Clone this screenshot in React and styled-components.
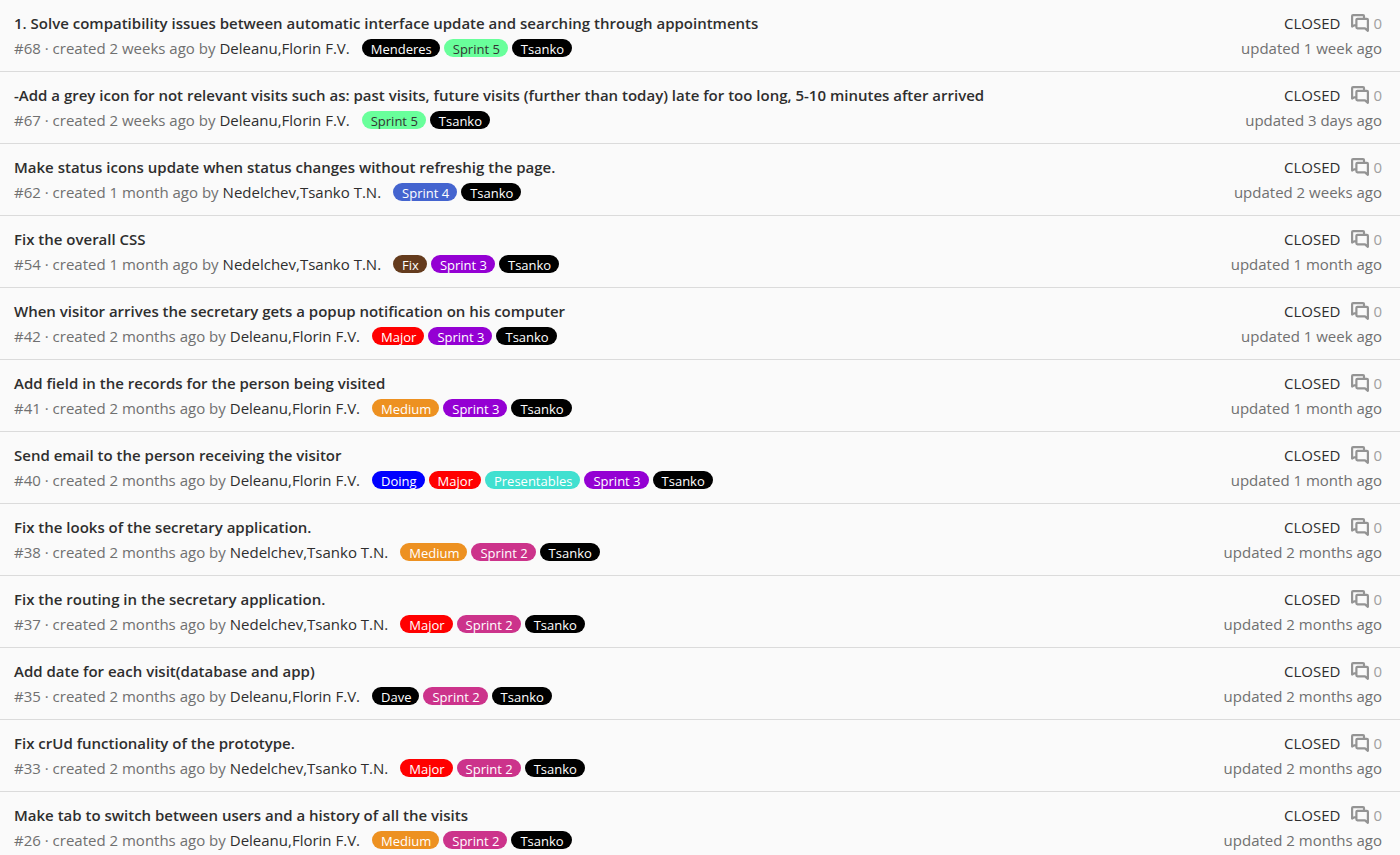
import React from "react";
import styled, { createGlobalStyle } from "styled-components";

const GlobalStyle = createGlobalStyle`
  * { box-sizing: border-box; }
  body {
    margin: 0;
    background: #fafafa;
    color: #2e2e2e;
    font-family: "Segoe UI", "Open Sans", "Noto Sans", sans-serif;
    font-size: 15px;
    line-height: 24px;
  }
`;

const IssueList = styled.ul`
  list-style: none;
  margin: 0;
  padding: 0;
`;

const IssueRow = styled.li`
  display: flex;
  justify-content: space-between;
  gap: 16px;
  padding: 11px 18px 11px 14px;
  border-bottom: 1px solid #dbdbdb;
  white-space: nowrap;
`;

const Main = styled.div`
  display: flex;
  flex-direction: column;
  gap: 1px;
  min-width: 0;
`;

const Title = styled.a`
  color: #2e2e2e;
  font-weight: 600;
  text-decoration: none;
`;

const Meta = styled.div`
  display: flex;
  align-items: center;
  color: #707070;
`;

const Author = styled.a`
  margin-left: 4px;
  color: #2e2e2e;
  text-decoration: none;
`;

const Labels = styled.div`
  display: flex;
  gap: 4px;
  margin-left: 12px;
`;

const Label = styled.a`
  height: 18px;
  padding: 0 8px 0 9px;
  border-radius: 9px;
  overflow: hidden;
  background: ${(p) => p.$bg};
  color: ${(p) => p.$fg || "#fff"};
  font-size: 13px;
  line-height: 20px;
  text-decoration: none;
`;

const Side = styled.div`
  display: flex;
  flex-direction: column;
  align-items: flex-end;
  gap: 1px;
  color: #707070;
`;

const Status = styled.div`
  display: flex;
  align-items: center;
  color: #2e2e2e;
`;

const Comments = styled.a`
  display: flex;
  align-items: center;
  gap: 4px;
  margin-left: 11px;
  color: #a0a0a0;
  text-decoration: none;
`;

function CommentsIcon() {
  return (
    <svg width="18" height="18" viewBox="0 0 18 18" fill="none" stroke="#949494" strokeWidth="2.2" strokeLinejoin="round" aria-hidden="true">
      <path d="M13 4.6V2.1Q13 1.1 12 1.1H2.1Q1.1 1.1 1.1 2.1V12.6L3.2 11.4H5.4" />
      <path d="M6.4 4.8H15.9Q16.9 4.8 16.9 5.8V16.8L14 14.3H6.4Q5.4 14.3 5.4 13.3V5.8Q5.4 4.8 6.4 4.8Z" />
    </svg>
  );
}

const LABELS = {
  Menderes: ["#000000"],
  Tsanko: ["#000000"],
  Dave: ["#000000"],
  "Sprint 5": ["#69ff9b", "#333333"],
  "Sprint 4": ["#4464cf"],
  "Sprint 3": ["#9400d3"],
  "Sprint 2": ["#cc338b"],
  Fix: ["#643b1d"],
  Major: ["#ff0000"],
  Medium: ["#ed9121"],
  Doing: ["#0000ff"],
  Presentables: ["#40e0d0"],
};

const FLORIN = "Deleanu,Florin F.V.";
const TSANKO = "Nedelchev,Tsanko T.N.";

const ISSUES = [
  [68, "1. Solve compatibility issues between automatic interface update and searching through appointments", "2 weeks", FLORIN, ["Menderes", "Sprint 5", "Tsanko"], "1 week"],
  [67, "-Add a grey icon for not relevant visits such as: past visits, future visits (further than today) late for too long, 5-10 minutes after arrived", "2 weeks", FLORIN, ["Sprint 5", "Tsanko"], "3 days"],
  [62, "Make status icons update when status changes without refreshig the page.", "1 month", TSANKO, ["Sprint 4", "Tsanko"], "2 weeks"],
  [54, "Fix the overall CSS", "1 month", TSANKO, ["Fix", "Sprint 3", "Tsanko"], "1 month"],
  [42, "When visitor arrives the secretary gets a popup notification on his computer", "2 months", FLORIN, ["Major", "Sprint 3", "Tsanko"], "1 week"],
  [41, "Add field in the records for the person being visited", "2 months", FLORIN, ["Medium", "Sprint 3", "Tsanko"], "1 month"],
  [40, "Send email to the person receiving the visitor", "2 months", FLORIN, ["Doing", "Major", "Presentables", "Sprint 3", "Tsanko"], "1 month"],
  [38, "Fix the looks of the secretary application.", "2 months", TSANKO, ["Medium", "Sprint 2", "Tsanko"], "2 months"],
  [37, "Fix the routing in the secretary application.", "2 months", TSANKO, ["Major", "Sprint 2", "Tsanko"], "2 months"],
  [35, "Add date for each visit(database and app)", "2 months", FLORIN, ["Dave", "Sprint 2", "Tsanko"], "2 months"],
  [33, "Fix crUd functionality of the prototype.", "2 months", TSANKO, ["Major", "Sprint 2", "Tsanko"], "2 months"],
  [26, "Make tab to switch between users and a history of all the visits", "2 months", FLORIN, ["Medium", "Sprint 2", "Tsanko"], "2 months"],
];

export default function App() {
  return (
    <>
      <GlobalStyle />
      <IssueList>
        {ISSUES.map(([id, title, created, author, labels, updated]) => (
          <IssueRow key={id}>
            <Main>
              <Title href={`#issue-${id}`}>{title}</Title>
              <Meta>
                <span>{`#${id} · created ${created} ago by`}</span>
                <Author href="#author">{author}</Author>
                <Labels>
                  {labels.map((name) => (
                    <Label key={name} href="#label" $bg={LABELS[name][0]} $fg={LABELS[name][1]}>
                      {name}
                    </Label>
                  ))}
                </Labels>
              </Meta>
            </Main>
            <Side>
              <Status>
                CLOSED
                <Comments href={`#comments-${id}`}>
                  <CommentsIcon />
                  <span>0</span>
                </Comments>
              </Status>
              <span>{`updated ${updated} ago`}</span>
            </Side>
          </IssueRow>
        ))}
      </IssueList>
    </>
  );
}
